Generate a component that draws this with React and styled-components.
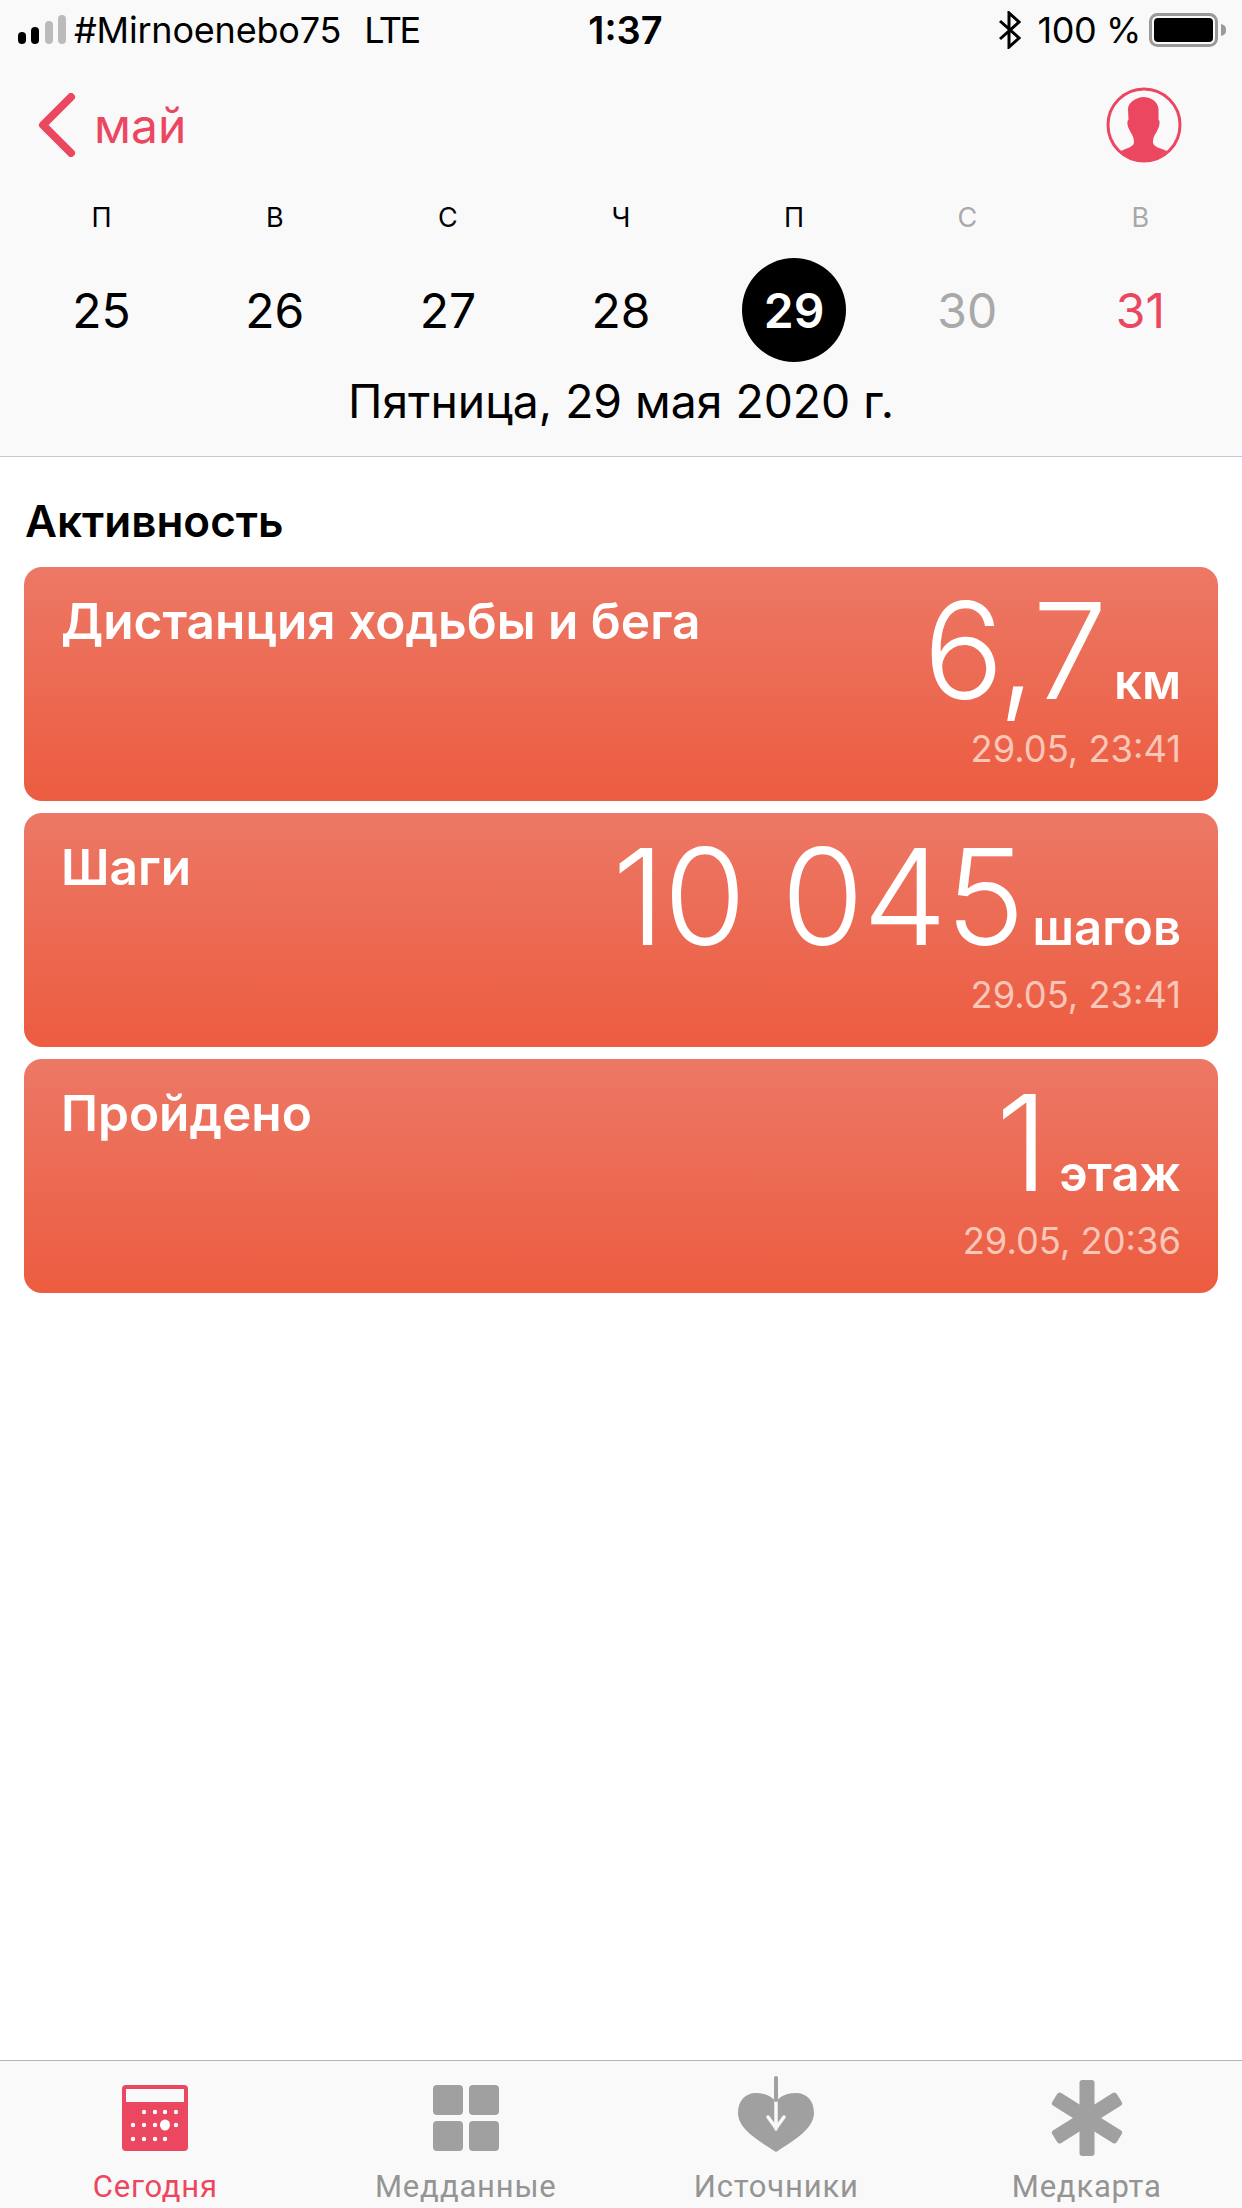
import React from 'react';
import styled, { createGlobalStyle } from 'styled-components';

const GlobalStyle = createGlobalStyle`
  html, body { margin: 0; padding: 0; background: #fff; }
  body { font-family: Inter, "Noto Sans", sans-serif; }
`;

const Screen = styled.div`
  width: 1242px;
  height: 2208px;
  display: flex;
  flex-direction: column;
  overflow: hidden;
  background: #fff;
  color: #000;
`;

const Header = styled.header`
  height: 456px;
  background: #f9f9f9;
  border-bottom: 1px solid #c6c6c8;
  display: flex;
  flex-direction: column;
`;

const StatusBar = styled.div`
  height: 60px;
  padding: 0 15px 0 18px;
  display: grid;
  grid-template-columns: 1fr auto 1fr;
  align-items: center;
  font-size: 36px;
  box-sizing: border-box;
`;

const StatusLeft = styled.div`
  display: flex;
  align-items: center;
  gap: 8px;
`;

const Carrier = styled.span`
  letter-spacing: -0.2px;
`;

const Network = styled.span`
  margin-left: 15px;
  letter-spacing: -2.4px;
`;

const Clock = styled.span`
  font-weight: 600;
  font-size: 38px;
  margin-left: 6px;
`;

const StatusRight = styled.div`
  display: flex;
  align-items: center;
  justify-content: flex-end;
  gap: 10px;
`;

const Percent = styled.span`
  margin: 0 -2px 0 6px;
  letter-spacing: -0.4px;
`;

const NavRow = styled.div`
  height: 130px;
  padding: 0 60px 0 38px;
  display: flex;
  align-items: center;
  justify-content: space-between;
`;

const BackLink = styled.div`
  display: flex;
  align-items: center;
  gap: 18px;
  color: #ec4760;
  font-size: 48px;
`;

const Week = styled.div`
  padding: 13px 15px 0;
  display: grid;
  grid-template-columns: repeat(7, 1fr);
`;

const WeekLetter = styled.div`
  height: 34px;
  margin-top: -2px;
  text-align: center;
  font-size: 27px;
  line-height: 34px;
  color: ${({ $muted }) => ($muted ? '#a9a9a9' : '#000')};
`;

const DayCell = styled.div`
  height: 104px;
  margin-top: 23px;
  display: flex;
  align-items: center;
  justify-content: center;
`;

const DayNumber = styled.div`
  width: 104px;
  height: 104px;
  border-radius: 50%;
  display: flex;
  align-items: center;
  justify-content: center;
  font-size: 48px;
  font-weight: ${({ $selected }) => ($selected ? 600 : 400)};
  background: ${({ $selected }) => ($selected ? '#000' : 'transparent')};
  color: ${({ $selected, $color }) => ($selected ? '#fff' : $color || '#000')};
`;

const DateLine = styled.div`
  margin-top: 12px;
  text-align: center;
  font-size: 46.3px;
  line-height: 54px;
`;

const Content = styled.main`
  flex: 1;
  padding: 0 24px;
`;

const SectionTitle = styled.h2`
  margin: 40px 0 0 1px;
  height: 70px;
  font-size: 44px;
  line-height: 48px;
  font-weight: 600;
`;

const CardList = styled.div`
  display: flex;
  flex-direction: column;
  gap: 12px;
`;

const Card = styled.section`
  height: 234px;
  box-sizing: border-box;
  padding: 24px 37px 0 37px;
  border-radius: 18px;
  background: linear-gradient(180deg, #ec7865 0%, #ec5c40 100%);
  color: #fff;
  display: flex;
  justify-content: space-between;
`;

const CardTitle = styled.div`
  font-size: 49.6px;
  line-height: 60px;
  font-weight: 600;
`;

const CardData = styled.div`
  display: flex;
  flex-direction: column;
  align-items: flex-end;
`;

const Reading = styled.div`
  display: flex;
  align-items: baseline;
  height: 134px;
  line-height: 119px;
`;

const Value = styled.span`
  font-size: 134px;
  font-weight: 280;
  letter-spacing: -1.4px;
`;

const Unit = styled.span`
  margin-left: ${({ $gap }) => $gap}px;
  font-size: 49px;
  font-weight: 600;
`;

const Stamp = styled.div`
  margin-top: 2px;
  font-size: 36.3px;
  line-height: 44px;
  color: #f9c6b8;
`;

const TabBar = styled.nav`
  height: 148px;
  box-sizing: border-box;
  border-top: 1px solid #b4b4b4;
  background: #f9f9f9;
  display: grid;
  grid-template-columns: repeat(4, 1fr);
`;

const Tab = styled.div`
  display: flex;
  flex-direction: column;
  align-items: center;
  padding-top: 14px;
  color: ${({ $active }) => ($active ? '#ec4760' : '#949494')};
`;

const TabLabel = styled.span`
  margin-top: 9px;
  font-family: Roboto, sans-serif;
  font-size: 31px;
  line-height: 36px;
  letter-spacing: 0.8px;
`;

const days = [
  { letter: 'П', num: 25 },
  { letter: 'В', num: 26 },
  { letter: 'С', num: 27 },
  { letter: 'Ч', num: 28 },
  { letter: 'П', num: 29, selected: true },
  { letter: 'С', num: 30, muted: true, color: '#a9a9a9' },
  { letter: 'В', num: 31, muted: true, color: '#ec4760' },
];

const cards = [
  { title: 'Дистанция ходьбы и бега', value: '6,7', unit: 'км', gap: 8, stamp: '29.05, 23:41' },
  { title: 'Шаги', value: '10 045', unit: 'шагов', gap: 9, stamp: '29.05, 23:41' },
  { title: 'Пройдено', value: '1', unit: 'этаж', gap: 12, stamp: '29.05, 20:36' },
];

const SignalIcon = () => (
  <svg width="48" height="30" viewBox="0 0 48 30">
    <rect x="0" y="17" width="8" height="12" rx="4" fill="#000" />
    <rect x="13" y="12" width="8" height="17" rx="4" fill="#000" />
    <rect x="27" y="6" width="8" height="23" rx="4" fill="#bbb" />
    <rect x="40" y="0" width="8" height="29" rx="4" fill="#bbb" />
  </svg>
);

const BluetoothIcon = () => (
  <svg width="22" height="38" viewBox="0 0 22 38" fill="none" stroke="#000" strokeWidth="3">
    <path d="M1 10 L20 27 L10 36 L10 2 L20 11 L1 28" />
  </svg>
);

const BatteryIcon = () => (
  <svg width="78" height="34" viewBox="0 0 78 34">
    <rect x="1.5" y="1.5" width="66" height="31" rx="7" fill="none" stroke="#999" strokeWidth="3" />
    <rect x="5" y="5" width="59" height="24" rx="4" fill="#000" />
    <path d="M72 11 C76 12 77 14 77 17 C77 20 76 22 72 23 Z" fill="#999" />
  </svg>
);

const ChevronIcon = () => (
  <svg width="38" height="64" viewBox="0 0 38 64" fill="none" stroke="#ec4760" strokeWidth="8" strokeLinecap="round" strokeLinejoin="round">
    <path d="M33 4 L5 32 L33 60" />
  </svg>
);

const ProfileIcon = () => (
  <svg width="76" height="76" viewBox="0 0 76 76">
    <ellipse cx="38" cy="38" rx="36" ry="36" fill="none" stroke="#ec4760" strokeWidth="3" />
    <path
      fill="#ec4760"
      d="M37.5 10 C44 10 52 14 52.5 22 L52.5 33 C54 33 54 38 52 42 L50 46 C47 50 47 54 47 56 C48 60 54 61 61 64 C52 72 44 75 37.5 75 C30 75 23 72 15 64 C21 61 27 60 28 56 C28 54 28 50 25 46 L23 42 C21 38 21 33 22.5 33 L22 22 C22 15 31 10 37.5 10 Z"
    />
  </svg>
);

const dots = [
  [34, 37], [45, 37], [55, 37], [66, 37],
  [23, 50], [34, 50], [45, 50], [66, 50],
  [23, 64], [34, 64], [45, 64], [55, 64],
];

const TodayIcon = () => (
  <svg width="90" height="85" viewBox="0 0 90 85">
    <rect x="12" y="10" width="66" height="66" rx="4" fill="#ec4760" />
    <rect x="16" y="14" width="58" height="13" fill="#f9f9f9" />
    {dots.map(([x, y]) => (
      <circle key={`${x}-${y}`} cx={x} cy={y} r="2.2" fill="#fff" />
    ))}
    <ellipse cx="55" cy="50" rx="5" ry="5.5" fill="#fff" />
  </svg>
);

const GridIcon = () => (
  <svg width="90" height="85" viewBox="0 0 90 85" fill="#a0a0a0">
    <rect x="12" y="10" width="30" height="30" rx="4" />
    <rect x="48" y="10" width="30" height="30" rx="4" />
    <rect x="12" y="46" width="30" height="30" rx="4" />
    <rect x="48" y="46" width="30" height="30" rx="4" />
  </svg>
);

const HeartIcon = () => (
  <svg width="90" height="85" viewBox="0 0 90 85">
    <path
      fill="#a0a0a0"
      d="M45 77 C28 66 7 54 7 38 C7 26 14 18 25 18 C34 18 41 21 45 27 C49 21 56 18 65 18 C76 18 83 26 83 38 C83 54 62 66 45 77 Z"
    />
    <path d="M45 22 L45 54 M37 42 L45 53 L53 42" fill="none" stroke="#f9f9f9" strokeWidth="3.5" strokeLinecap="round" />
    <path d="M45 3 L45 25" stroke="#a0a0a0" strokeWidth="4" strokeLinecap="round" />
  </svg>
);

const AsteriskIcon = () => (
  <svg width="90" height="85" viewBox="0 0 90 85" fill="#a0a0a0">
    <rect x="37.5" y="5" width="15" height="76" rx="3" />
    <rect x="37.5" y="5" width="15" height="76" rx="3" transform="rotate(58 45 43)" />
    <rect x="37.5" y="5" width="15" height="76" rx="3" transform="rotate(-58 45 43)" />
  </svg>
);

const tabs = [
  { label: 'Сегодня', Icon: TodayIcon, active: true },
  { label: 'Медданные', Icon: GridIcon },
  { label: 'Источники', Icon: HeartIcon },
  { label: 'Медкарта', Icon: AsteriskIcon },
];

const App = () => (
  <Screen>
    <GlobalStyle />
    <Header>
      <StatusBar>
        <StatusLeft>
          <SignalIcon />
          <Carrier>#Mirnoenebo75</Carrier>
          <Network>LTE</Network>
        </StatusLeft>
        <Clock>1:37</Clock>
        <StatusRight>
          <BluetoothIcon />
          <Percent>100 %</Percent>
          <BatteryIcon />
        </StatusRight>
      </StatusBar>
      <NavRow>
        <BackLink>
          <ChevronIcon />
          май
        </BackLink>
        <ProfileIcon />
      </NavRow>
      <Week>
        {days.map((d, i) => (
          <WeekLetter key={i} $muted={d.muted}>{d.letter}</WeekLetter>
        ))}
        {days.map((d) => (
          <DayCell key={d.num}>
            <DayNumber $selected={d.selected} $color={d.color}>{d.num}</DayNumber>
          </DayCell>
        ))}
      </Week>
      <DateLine>Пятница, 29 мая 2020 г.</DateLine>
    </Header>
    <Content>
      <SectionTitle>Активность</SectionTitle>
      <CardList>
        {cards.map((c) => (
          <Card key={c.title}>
            <CardTitle>{c.title}</CardTitle>
            <CardData>
              <Reading>
                <Value>{c.value}</Value>
                <Unit $gap={c.gap}>{c.unit}</Unit>
              </Reading>
              <Stamp>{c.stamp}</Stamp>
            </CardData>
          </Card>
        ))}
      </CardList>
    </Content>
    <TabBar>
      {tabs.map(({ label, Icon, active }) => (
        <Tab key={label} $active={active}>
          <Icon />
          <TabLabel>{label}</TabLabel>
        </Tab>
      ))}
    </TabBar>
  </Screen>
);

export default App;
